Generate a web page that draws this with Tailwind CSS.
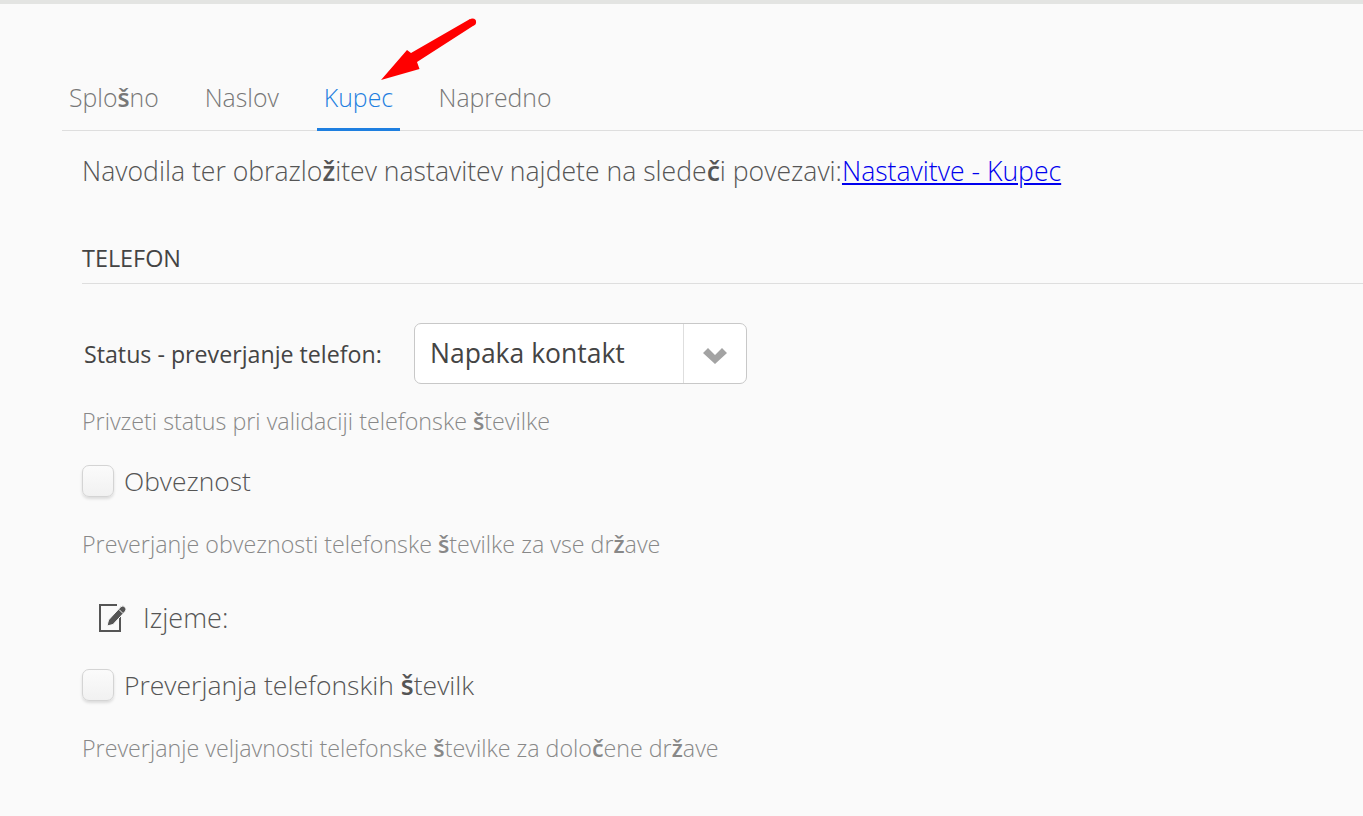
<!DOCTYPE html>
<html lang="sl">
<head>
  <meta charset="UTF-8">
  <title>Nastavitve - Kupec</title>
  <script src="https://cdn.jsdelivr.net/npm/@tailwindcss/browser@4"></script>
</head>
<body class="relative h-[816px] overflow-hidden bg-[#fafafa] font-['Open_Sans',sans-serif] font-light text-[#555]">
  <div class="h-[4px] bg-[#e3e4e2]"></div>

  <!-- Tabs -->
  <div class="ml-[62px] mt-[58px] flex h-[69px] border-b border-[#dedede] text-[24.8px] text-[#777]">
    <a class="flex h-[69px] items-center px-[7px] pt-[2px]">Splo<b class="font-semibold">š</b>no</a>
    <a class="ml-[32px] flex h-[69px] items-center px-[7px] pt-[2px]">Naslov</a>
    <a class="ml-[31px] flex h-[69px] items-center border-b-[3px] border-[#1e7fe0] px-[7px] pt-[5px] text-[#1e7fe0]">Kupec</a>
    <a class="ml-[24.5px] flex h-[69px] items-center px-[14px] pt-[2px]">Napredno</a>
  </div>

  <!-- Arrow -->
  <svg class="absolute left-[375px] top-[15px]" width="105" height="70" viewBox="0 0 105 70">
    <path d="M6 65 L32 35 L36 38 L95 4 L99.5 10 L42 47 L44.5 54 Z" fill="#ff0000"/>
    <circle cx="97.5" cy="7" r="3.6" fill="#ff0000"/>
  </svg>

  <div class="ml-[82px]">
    <p class="mt-[20px] text-[26.6px] leading-[40px]">Navodila ter obrazlo<b class="font-semibold">ž</b>itev nastavitev najdete na slede<b class="font-semibold">č</b>i povezavi:<a href="#" class="text-[#0000ee] underline">Nastavitve - Kupec</a></p>

    <h3 class="mt-[52px] h-[41px] border-b border-[#dedede] text-[23.4px] font-normal leading-[30px] text-[#444]">TELEFON</h3>

    <div class="mt-[39px] flex items-center">
      <label class="ml-[2px] w-[330px] pt-[2px] text-[23.2px] font-normal text-[#444]">Status - preverjanje telefon:</label>
      <div class="flex h-[61px] w-[333px] rounded-[7px] border border-[#c8c8c8] bg-white">
        <div class="flex-1 pl-[15px] text-[26.5px] font-normal leading-[58px] text-[#444]">Napaka kontakt</div>
        <div class="flex w-[63px] items-center justify-center border-l border-[#dedede] pt-[4px]">
          <svg width="24" height="16" viewBox="0 0 24 16"><path d="M0 5 L5 0 L12 7 L19 0 L24 5 L12 16 Z" fill="#a3a3a3"/></svg>
        </div>
      </div>
    </div>

    <p class="mt-[21px] text-[23.25px] leading-[32px] text-[#888]">Privzeti status pri validaciji telefonske <b class="font-semibold">š</b>tevilke</p>

    <div class="mt-[26px] flex items-center gap-[10px] text-[26.4px] leading-[36px]">
      <span class="h-[32px] w-[32px] rounded-[7px] border border-[#d4d4d4] bg-linear-to-b from-[#fbfbfb] to-[#f1f1f1] shadow-[0_2px_3px_rgba(0,0,0,0.12)]"></span>
      Obveznost
    </div>

    <p class="mt-[29px] text-[23.25px] leading-[32px] text-[#888]">Preverjanje obveznosti telefonske <b class="font-semibold">š</b>tevilke za vse dr<b class="font-semibold">ž</b>ave</p>

    <div class="ml-[17px] mt-[40px] flex items-center gap-[16px] text-[27px] leading-[36px]">
      <svg width="28" height="28" viewBox="0 0 28 28">
        <path d="M21 8 V27 H1 V1 H18" fill="none" stroke="#555" stroke-width="2"/>
        <path d="M8 22 L9.5 16 L22 2.5 Q24 1 26 3 Q28 5 26.5 7 L14 20.5 Z" fill="#555" stroke="#fafafa" stroke-width="1"/>
        <path d="M20 5.5 L24 9.5" stroke="#fafafa" stroke-width="1"/>
      </svg>
      Izjeme:
    </div>

    <div class="mt-[31px] flex items-center gap-[10px] text-[26.5px] leading-[36px]">
      <span class="h-[32px] w-[32px] rounded-[7px] border border-[#d4d4d4] bg-linear-to-b from-[#fbfbfb] to-[#f1f1f1] shadow-[0_2px_3px_rgba(0,0,0,0.12)]"></span>
      <span>Preverjanja telefonskih <b class="font-semibold">š</b>tevilk</span>
    </div>

    <p class="mt-[29px] text-[23.25px] leading-[32px] text-[#888]">Preverjanje veljavnosti telefonske <b class="font-semibold">š</b>tevilke za dolo<b class="font-semibold">č</b>ene dr<b class="font-semibold">ž</b>ave</p>
  </div>
</body>
</html>
